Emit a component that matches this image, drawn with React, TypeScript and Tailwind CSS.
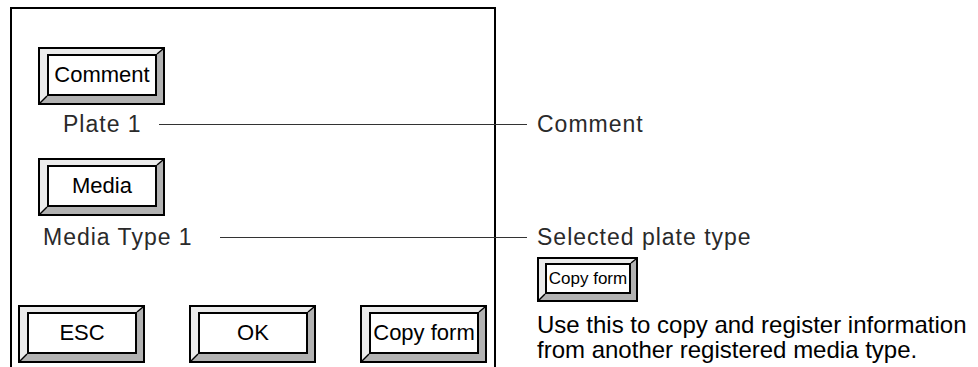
import type { ReactNode } from 'react';

const font = { fontFamily: '"Liberation Sans", Arial, sans-serif' };

function BevelButton({ children, small = false }: { children: ReactNode; small?: boolean }) {
  if (small) {
    return (
      <div className="relative w-[101px] h-[45px] border-2 border-black flex">
        <div className="flex-1 flex border-t-[4px] border-l-[6px] border-r-[5px] border-b-[6px] border-t-[#ebebeb] border-l-[#ebebeb] border-r-[#b2b2b2] border-b-[#b2b2b2]">
          <div className="flex-1 flex items-center justify-center border-2 border-black bg-white text-[17px] text-black leading-none">
            {children}
          </div>
        </div>
        <svg className="absolute -left-[2px] -top-[2px] pointer-events-none" width="101" height="45">
          <line x1="99" y1="2" x2="94" y2="6" stroke="#000" strokeWidth="1.5" />
          <line x1="2" y1="43" x2="8" y2="37" stroke="#000" strokeWidth="1.5" />
        </svg>
      </div>
    );
  }
  return (
    <div className="relative w-[127px] h-[58px] border-2 border-black flex">
      <div className="flex-1 flex border-t-[5px] border-l-[7px] border-r-[6px] border-b-[7px] border-t-[#ebebeb] border-l-[#ebebeb] border-r-[#b2b2b2] border-b-[#b2b2b2]">
        <div className="flex-1 flex items-center justify-center border-2 border-black bg-white text-[22px] text-black leading-none">
          {children}
        </div>
      </div>
      <svg className="absolute -left-[2px] -top-[2px] pointer-events-none" width="127" height="58">
        <line x1="125" y1="2" x2="119" y2="7" stroke="#000" strokeWidth="1.5" />
        <line x1="2" y1="56" x2="9" y2="49" stroke="#000" strokeWidth="1.5" />
      </svg>
    </div>
  );
}

function LeaderRow({ label, note, reach, gap }: { label: string; note: string; reach: number; gap: number }) {
  return (
    <div className="w-max grid items-center" style={{ gridTemplateColumns: `${reach}px auto` }}>
      <div className="flex items-center">
        <span className="text-[23px] leading-[24px] tracking-[1px] text-[#2a2a2a] whitespace-nowrap">{label}</span>
        <div className="flex-1 h-px bg-[#333]" style={{ marginLeft: gap }} />
      </div>
      <span className="pl-[10px] text-[23px] leading-[24px] tracking-[1px] text-[#2a2a2a] whitespace-nowrap">{note}</span>
    </div>
  );
}

export default function App() {
  return (
    <div className="w-[978px] h-[367px] bg-white overflow-hidden flex" style={font}>
      <div className="ml-[10px] mt-[7px] w-[486px] h-[360px] shrink-0 border-t-2 border-x-2 border-black flex flex-col">
        <div className="ml-[26px] mt-[38px]">
          <BevelButton>Comment</BevelButton>
        </div>
        <div className="ml-[51px] mt-[7px]">
          <LeaderRow label="Plate 1" note="Comment" reach={464} gap={17} />
        </div>
        <div className="ml-[26px] mt-[22px]">
          <BevelButton>Media</BevelButton>
        </div>
        <div className="ml-[31px] mt-[9px]">
          <LeaderRow label="Media Type 1" note="Selected plate type" reach={484} gap={27} />
        </div>
        <div className="ml-[6px] mt-[56px] flex gap-[44px]">
          <BevelButton>ESC</BevelButton>
          <BevelButton>OK</BevelButton>
          <BevelButton>Copy form</BevelButton>
        </div>
      </div>

      <div className="ml-[41px] pt-[257px] flex flex-col">
        <BevelButton small>Copy form</BevelButton>
        <p className="mt-[10px] text-[24px] leading-[25px] text-black whitespace-nowrap">
          Use this to copy and register information
          <br />
          from another registered media type.
        </p>
      </div>
    </div>
  );
}
